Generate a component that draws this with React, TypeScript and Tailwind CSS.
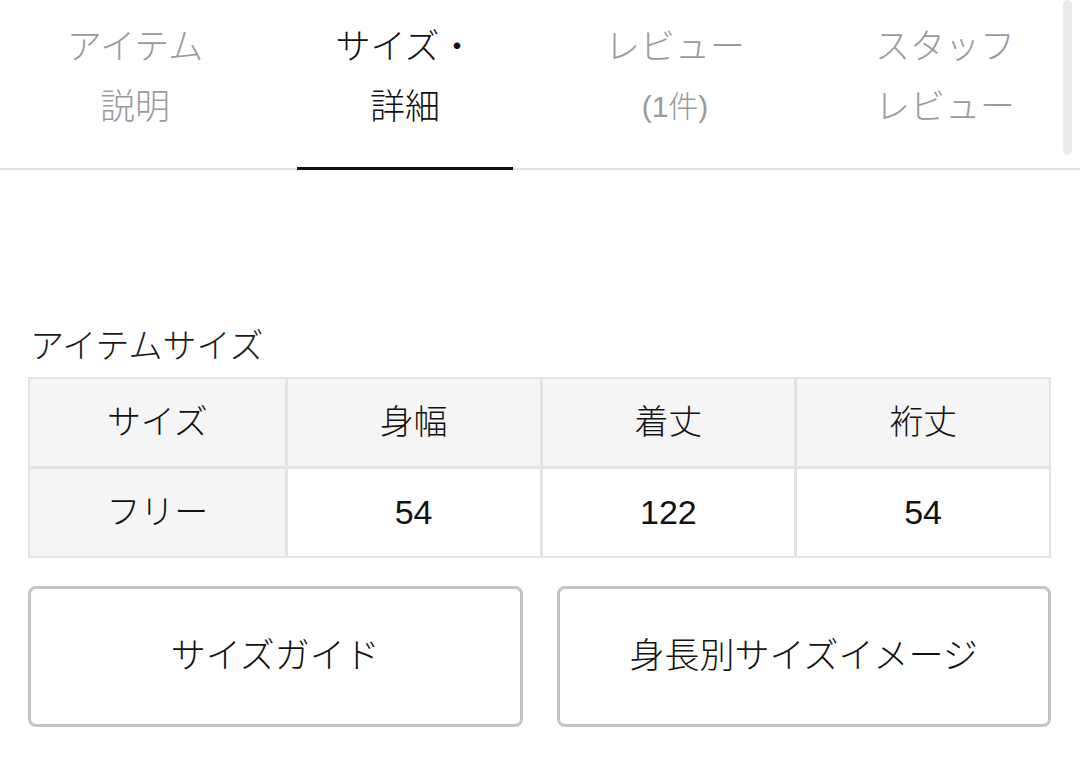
import React from 'react';

const tabs = [
  { lines: ['アイテム', '説明'], active: false },
  { lines: ['サイズ・', '詳細'], active: true },
  { lines: ['レビュー', '(1件)'], active: false, small: true },
  { lines: ['スタッフ', 'レビュー'], active: false },
];

const header = ['サイズ', '身幅', '着丈', '裄丈'];
const row = ['フリー', '54', '122', '54'];

export default function App() {
  return (
    <div
      className="w-[1080px] h-[774px] bg-white overflow-hidden text-[#111] font-light"
      style={{ fontFamily: '"Liberation Sans", "Noto Sans CJK JP", sans-serif' }}
    >
      <div className="relative flex border-b-2 border-[#e2e2e2] h-[170px]">
        {tabs.map((t, i) => (
          <div key={i} className="w-[270px] px-[27px] relative flex flex-col items-center pt-[17px]">
            <span
              className={`text-[35px] leading-[60px] ${t.active ? 'text-[#111]' : 'text-[#9a9a9a]'}`}
            >
              {t.lines[0]}
            </span>
            <span
              className={`leading-[60px] ${t.small ? 'text-[30px]' : 'text-[35px]'} ${
                t.active ? 'text-[#111]' : 'text-[#9a9a9a]'
              }`}
            >
              {t.lines[1]}
            </span>
            {t.active && (
              <div className="absolute left-[27px] right-[27px] bottom-[-2px] h-[3px] bg-[#111]" />
            )}
          </div>
        ))}
        <div className="absolute right-[8px] top-0 w-[9px] h-[155px] rounded-full bg-[#ebebeb]" />
      </div>

      <div className="px-[28px] pt-[152px]">
        <h3 className="text-[34px] leading-[48px] text-[#1a1a1a] pl-[2px] mb-[7px]">アイテムサイズ</h3>
        <div className="w-[1023px] border-[2px] border-[#e3e3e3]">
          <div className="grid grid-cols-4 bg-[#f5f5f5]">
            {header.map((h, i) => (
              <div
                key={i}
                className={`h-[87px] flex items-center justify-center text-[34px] ${
                  i > 0 ? 'border-l-[3px] border-[#e3e3e3]' : ''
                }`}
              >
                {h}
              </div>
            ))}
          </div>
          <div className="grid grid-cols-4 border-t-[3px] border-[#e3e3e3]">
            {row.map((c, i) => (
              <div
                key={i}
                className={`h-[87px] flex items-center justify-center text-[34px] ${
                  i === 0 ? 'bg-[#f5f5f5]' : 'bg-white border-l-[3px] border-[#e3e3e3]'
                }`}
              >
                {c}
              </div>
            ))}
          </div>
        </div>

        <div className="flex gap-[34px] mt-[28px] w-[1023px]">
          <button className="flex-1 h-[141px] rounded-[8px] border-[3px] border-[#c4c4c4] bg-white text-[35px] text-[#111]">
            サイズガイド
          </button>
          <button className="flex-1 h-[141px] rounded-[8px] border-[3px] border-[#c4c4c4] bg-white text-[35px] text-[#111]">
            身長別サイズイメージ
          </button>
        </div>
      </div>
    </div>
  );
}
